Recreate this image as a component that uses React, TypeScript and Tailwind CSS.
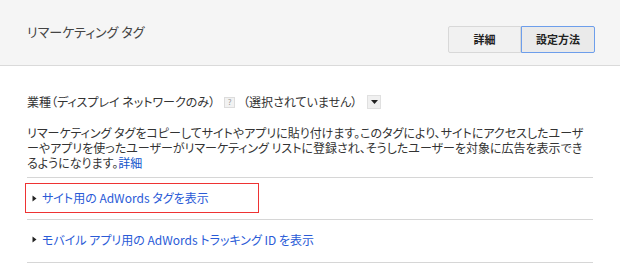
import React from "react";

const jp = "font-['Noto_Sans_CJK_JP','Noto_Sans',sans-serif] [font-feature-settings:'palt']";

function Caret() {
  return (
    <svg width="5" height="7" viewBox="0 0 5 7" className="shrink-0">
      <path d="M0.5 0.5 L4.5 3.5 L0.5 6.5 Z" fill="#222" />
    </svg>
  );
}

export default function App() {
  return (
    <div className={`h-[274px] w-[620px] overflow-hidden bg-white text-[#333] ${jp}`}>
      <div className="flex h-[66px] items-center justify-between border-b border-[#dadada] bg-[#f5f5f5] pl-[27px] pr-[25px]">
        <h1 className="mt-[-2px] text-[13px] font-normal text-[#444]">リマーケティング タグ</h1>
        <div className="mt-[14px] flex h-[27px] text-[11px] font-bold text-[#222]">
          <button className="w-[73px] rounded-l-[2px] border border-[#d8d8d8] bg-[#f1f1f1]">詳細</button>
          <button className="w-[74px] rounded-r-[2px] border border-[#6d9eeb] bg-[#eaeaea]">設定方法</button>
        </div>
      </div>

      <div className="px-[27px]">
        <div className="mt-[27px] flex items-center text-[12px]">
          <span>業種（ディスプレイ ネットワークのみ）</span>
          <span className="ml-[9px] flex h-[11px] w-[11px] items-center justify-center border border-[#dcdcdc] bg-[#f2f2f2] text-[8px] leading-none text-[#999]">?</span>
          <span className="ml-[8px]">（選択されていません）</span>
          <span className="ml-[10px] flex h-[14px] w-[14px] items-center justify-center border border-[#e0e0e0] bg-[#f0f0f0]">
            <svg width="7" height="4" viewBox="0 0 7 4">
              <path d="M0 0 H7 L3.5 4 Z" fill="#222" />
            </svg>
          </span>
        </div>

        <div className="mt-[14px] text-[12px] whitespace-nowrap">
          <p className="h-[15px] leading-[15px]">リマーケティング タグをコピーしてサイトやアプリに貼り付けます。このタグにより、サイトにアクセスしたユーザ</p>
          <p className="h-[15px] leading-[15px]">ーやアプリを使ったユーザーがリマーケティング リストに登録され、そうしたユーザーを対象に広告を表示でき</p>
          <p className="h-[15px] leading-[15px]">
            るようになります。<a className="text-[#1155cc]">詳細</a>
          </p>
        </div>

        <div className="mt-[7px] border-t border-[#d6d6d6] pt-[5px]">
          <div className="ml-[-2px] flex h-[30px] w-[234px] items-center gap-[5px] border border-[#ee3333] pl-[6px] text-[12px] text-[#2a5bd7]">
            <Caret />
            <span>サイト用の AdWords タグを表示</span>
          </div>
        </div>

        <div className="mt-[6px] flex h-[43px] items-center gap-[5px] border-t border-[#d6d6d6] pb-[3px] pl-[5px] text-[12px] text-[#2a5bd7]">
          <Caret />
          <span>モバイル アプリ用の AdWords トラッキング ID を表示</span>
        </div>
        <div className="border-t border-[#d6d6d6]" />
      </div>
    </div>
  );
}
